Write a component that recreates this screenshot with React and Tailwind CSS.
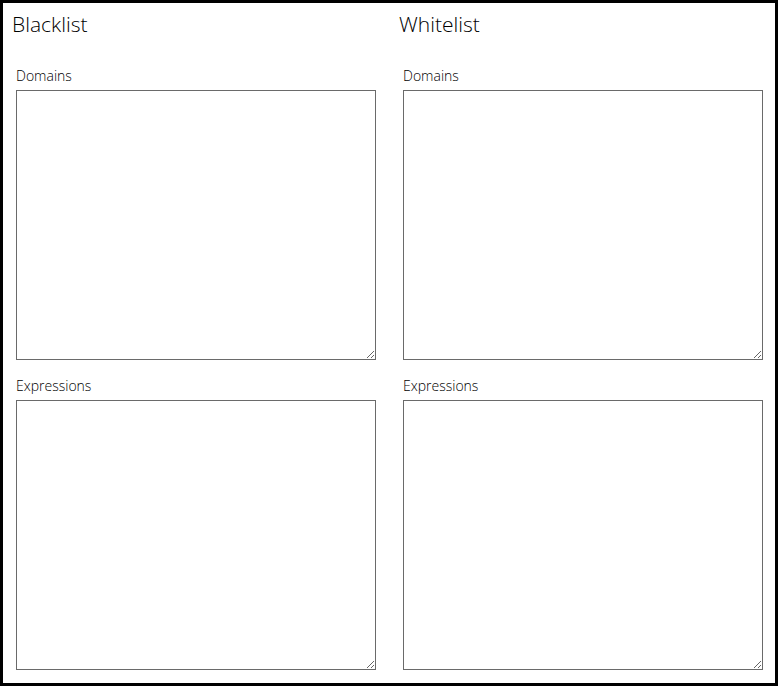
export default function App() {
  const columns = ["Blacklist", "Whitelist"];
  return (
    <div
      className="w-[778px] h-[686px] border-[3px] border-black bg-white text-black box-border"
      style={{ fontFamily: '"Open Sans", "Noto Sans", sans-serif' }}
    >
      <div className="grid grid-cols-2">
        {columns.map((title) => (
          <div key={title} className="pt-[7px] odd:pl-[9px] even:pl-[10px]">
            <h2 className="text-[21px] leading-[28px] font-light">{title}</h2>
            <div className="pl-[4px] mt-[28px]">
              <label className="block text-[14px] leading-[20px] font-light mb-[4px]">Domains</label>
              <textarea className="block w-[360px] h-[270px] border border-[#6a6a6a] bg-white" />
              <label className="block text-[14px] leading-[20px] font-light mt-[16px] mb-[4px]">
                Expressions
              </label>
              <textarea className="block w-[360px] h-[270px] border border-[#6a6a6a] bg-white" />
            </div>
          </div>
        ))}
      </div>
    </div>
  );
}
